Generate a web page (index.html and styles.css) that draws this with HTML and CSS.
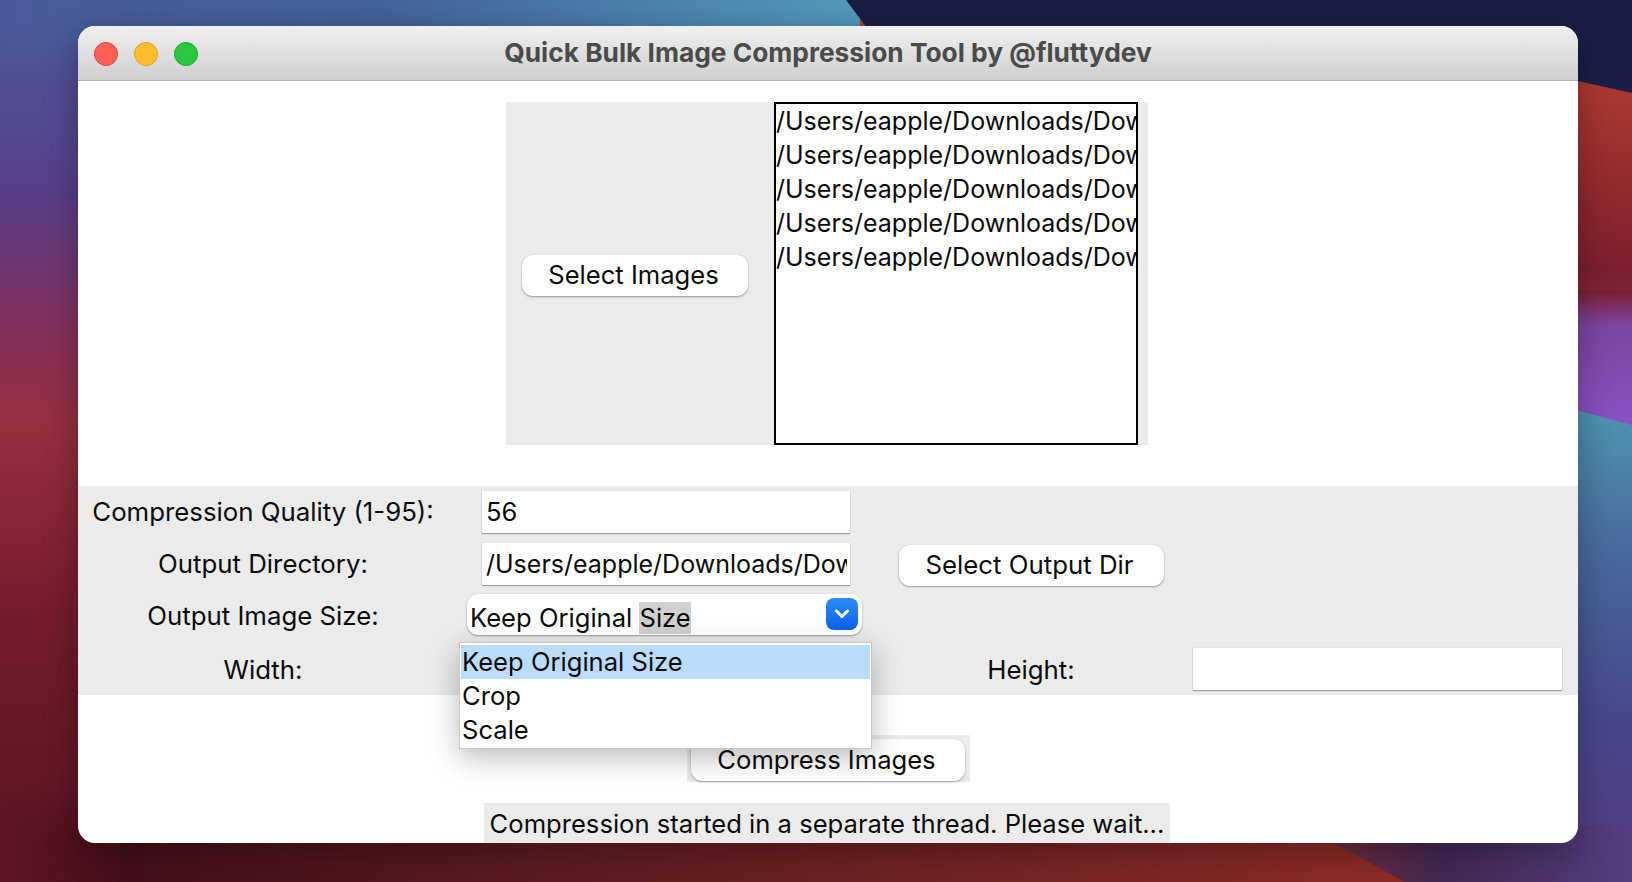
FILE: index.html
```html
<!DOCTYPE html>
<html lang="en">
<head>
<meta charset="utf-8">
<title>Quick Bulk Image Compression Tool</title>
<link rel="stylesheet" href="styles.css">
</head>
<body>
<svg class="wallpaper" viewBox="0 0 1632 882" preserveAspectRatio="none" aria-hidden="true">
  <defs>
    <linearGradient id="gLeft" x1="0" y1="0" x2="0" y2="1">
      <stop offset="0" stop-color="#4a5b9c"/>
      <stop offset=".22" stop-color="#583f88"/>
      <stop offset=".38" stop-color="#86305a"/>
      <stop offset=".48" stop-color="#96303f"/>
      <stop offset=".7" stop-color="#741b2b"/>
      <stop offset="1" stop-color="#5a1422"/>
    </linearGradient>
    <linearGradient id="gTop" x1="0" y1="0" x2="850" y2="0" gradientUnits="userSpaceOnUse">
      <stop offset="0" stop-color="#4b5a9c"/>
      <stop offset=".45" stop-color="#43649a"/>
      <stop offset="1" stop-color="#5299bb"/>
    </linearGradient>
    <linearGradient id="gBottom" x1="0" y1="0" x2="1400" y2="0" gradientUnits="userSpaceOnUse">
      <stop offset="0" stop-color="#5f1524"/>
      <stop offset=".09" stop-color="#440f1a"/>
      <stop offset=".4" stop-color="#5c1c20"/>
      <stop offset="1" stop-color="#8c2b28"/>
    </linearGradient>
    <linearGradient id="gRed" x1="0" y1="60" x2="0" y2="320" gradientUnits="userSpaceOnUse">
      <stop offset="0" stop-color="#b43c30"/>
      <stop offset=".8" stop-color="#7c1f2e"/>
      <stop offset="1" stop-color="#7c2a4c"/>
    </linearGradient>
    <linearGradient id="gPurple" x1="0" y1="290" x2="0" y2="430" gradientUnits="userSpaceOnUse">
      <stop offset="0" stop-color="#7c1f30"/>
      <stop offset=".25" stop-color="#7c44a0"/>
      <stop offset="1" stop-color="#8a52c4"/>
    </linearGradient>
    <linearGradient id="gTeal" x1="0" y1="410" x2="0" y2="882" gradientUnits="userSpaceOnUse">
      <stop offset="0" stop-color="#4f94b0"/>
      <stop offset=".3" stop-color="#48699c"/>
      <stop offset=".65" stop-color="#47488a"/>
      <stop offset="1" stop-color="#563a80"/>
    </linearGradient>
    <linearGradient id="gCorner" x1="1340" y1="0" x2="1632" y2="0" gradientUnits="userSpaceOnUse">
      <stop offset="0" stop-color="#6c2a3c"/>
      <stop offset=".35" stop-color="#412852"/>
      <stop offset="1" stop-color="#553e80"/>
    </linearGradient>
    <linearGradient id="fadeTop" x1="0" y1="0" x2="0" y2="70" gradientUnits="userSpaceOnUse">
      <stop offset=".3" stop-color="#fff"/>
      <stop offset="1" stop-color="#000"/>
    </linearGradient>
    <linearGradient id="fadeBottom" x1="0" y1="790" x2="0" y2="860" gradientUnits="userSpaceOnUse">
      <stop offset="0" stop-color="#000"/>
      <stop offset=".75" stop-color="#fff"/>
    </linearGradient>
    <mask id="maskTop" maskUnits="userSpaceOnUse" x="0" y="0" width="1632" height="882">
      <rect width="1632" height="882" fill="url(#fadeTop)"/>
    </mask>
    <mask id="maskBottom" maskUnits="userSpaceOnUse" x="0" y="0" width="1632" height="882">
      <rect width="1632" height="882" fill="url(#fadeBottom)"/>
    </mask>
  </defs>
  <rect width="1632" height="882" fill="url(#gLeft)"/>
  <rect width="860" height="70" fill="url(#gTop)" mask="url(#maskTop)"/>
  <rect y="790" width="1632" height="92" fill="url(#gBottom)" mask="url(#maskBottom)"/>
  <polygon points="860,20 1632,60 1632,320 1100,320 860,60" fill="url(#gRed)"/>
  <polygon points="1500,290 1632,290 1632,430 1500,430" fill="url(#gPurple)"/>
  <polygon points="1500,390 1632,425 1632,882 1500,882" fill="url(#gTeal)"/>
  <polygon points="1300,825 1405,882 1632,882 1632,825" fill="url(#gCorner)"/>
  <polygon points="846,0 1632,0 1632,93 1578,81 905,46 867,28" fill="#1a1e47"/>
</svg>

<main class="window">
  <header class="titlebar">
    <div class="lights">
      <span class="light light-red"></span>
      <span class="light light-yellow"></span>
      <span class="light light-green"></span>
    </div>
    <h1 class="title">Quick Bulk Image Compression Tool by @fluttydev</h1>
  </header>

  <section class="picker-wrap">
    <div class="picker">
      <button class="btn btn-images" type="button">Select Images</button>
      <ul class="listbox">
        <li>/Users/eapple/Downloads/Dow</li>
        <li>/Users/eapple/Downloads/Dow</li>
        <li>/Users/eapple/Downloads/Dow</li>
        <li>/Users/eapple/Downloads/Dow</li>
        <li>/Users/eapple/Downloads/Dow</li>
      </ul>
    </div>
  </section>

  <section class="form">
    <label class="label label-wide">Compression Quality (1-95):</label>
    <div class="entry entry-mid">56</div>
    <span></span>
    <span></span>

    <label class="label label-wide">Output Directory:</label>
    <div class="entry entry-mid"><span class="entry-clip">/Users/eapple/Downloads/Dow</span></div>
    <button class="btn btn-output" type="button">Select Output Dir</button>
    <span></span>

    <label class="label label-wide label-low">Output Image Size:</label>
    <div class="combo">
      <span class="combo-text">Keep Original <span class="combo-sel">Size</span></span>
      <span class="combo-arrow">
        <svg width="16" height="10" viewBox="0 0 16 10" aria-hidden="true"><path d="M2.5 2 L8 7.5 L13.5 2" fill="none" stroke="#fff" stroke-width="3" stroke-linecap="round" stroke-linejoin="round"/></svg>
      </span>
      <ul class="dropdown">
        <li class="dropdown-active">Keep Original Size</li>
        <li>Crop</li>
        <li>Scale</li>
      </ul>
    </div>
    <span></span>
    <span></span>

    <label class="label label-wide label-low">Width:</label>
    <div class="entry entry-mid"></div>
    <label class="label label-wide label-low">Height:</label>
    <div class="entry entry-wide"></div>
  </section>

  <section class="compress-wrap">
    <div class="compress-back">
      <button class="btn btn-compress" type="button">Compress Images</button>
    </div>
  </section>

  <section class="status-wrap">
    <div class="status">Compression started in a separate thread. Please wait...</div>
  </section>
</main>
</body>
</html>
```

FILE: styles.css
```css
* { box-sizing: border-box; }

html, body {
  margin: 0;
  width: 1632px;
  height: 882px;
  overflow: hidden;
}

body {
  position: relative;
  font-family: Inter, "Liberation Sans", sans-serif;
  font-size: 25.6px;
  color: #0b0b0b;
  background: #5a1422;
}

.wallpaper {
  position: absolute;
  inset: 0;
  width: 1632px;
  height: 882px;
  display: block;
}

.window {
  position: absolute;
  left: 78px;
  top: 26px;
  width: 1500px;
  height: 817px;
  border-radius: 17px;
  overflow: hidden;
  background: #fff;
  display: flex;
  flex-direction: column;
  box-shadow: 0 8px 34px rgba(0, 0, 0, .32);
}

.titlebar {
  flex: none;
  height: 55px;
  padding-bottom: 2px;
  display: flex;
  align-items: center;
  justify-content: center;
  position: relative;
  background: linear-gradient(#f0f0f0, #cfcfcf);
  border-bottom: 1px solid #b2b2b2;
}

.lights {
  position: absolute;
  left: 16px;
  top: 16px;
  display: flex;
  gap: 16px;
}

.light {
  width: 24px;
  height: 24px;
  border-radius: 50%;
  border: 1px solid rgba(0, 0, 0, .1);
}
.light-red { background: #ff5f57; border-color: #e0443e; }
.light-yellow { background: #ffbd2e; border-color: #dea123; }
.light-green { background: #28c940; border-color: #1aab29; }

.title {
  margin: 0;
  font-size: 26.3px;
  font-weight: 700;
  color: #4b4b4b;
  white-space: nowrap;
}

.picker-wrap {
  flex: none;
  height: 405px;
  padding-top: 21px;
  padding-left: 428px;
}

.picker {
  width: 642px;
  height: 343px;
  background: #ebebeb;
  display: flex;
  align-items: center;
  padding: 0 10px 0 16px;
}

.btn {
  display: block;
  margin: 0;
  padding: 0 3px 2px 0;
  height: 42px;
  font: inherit;
  color: inherit;
  background: #fff;
  border: none;
  border-radius: 11px;
  box-shadow: 0 1px 2px rgba(0, 0, 0, .35), 0 0 1px rgba(0, 0, 0, .15);
  white-space: nowrap;
}

.btn-images {
  width: 226px;
  height: 41px;
  margin: 4px 26px 0 0;
}

.listbox {
  width: 364px;
  height: 343px;
  margin: 0;
  padding: 0;
  list-style: none;
  background: #fff;
  border: 2px solid #000;
  overflow: hidden;
  font-size: 25px;
}

.listbox li {
  height: 34px;
  line-height: 34px;
  white-space: nowrap;
  overflow: hidden;
}

.form {
  flex: none;
  height: 209px;
  background: #ebebeb;
  padding-top: 5px;
  display: grid;
  grid-template-columns: 370px 436px 294px 400px;
  grid-template-rows: 52px 51px 54px 42px;
  align-items: start;
  justify-items: center;
}

.label {
  height: 42px;
  line-height: 42px;
  white-space: nowrap;
}

.label-wide { font-size: 25.8px; }
.label-low { padding-top: 1px; }

.entry {
  height: 42px;
  line-height: 42px;
  background: #fff;
  box-shadow: 0 1px 1px rgba(0, 0, 0, .3), 0 0 1px rgba(0, 0, 0, .18);
  padding: 0 3px;
  white-space: nowrap;
  overflow: hidden;
}

.entry-mid { width: 368px; padding-left: 4px; }
.entry-wide { width: 369px; margin-left: -1px; }

.entry-clip {
  display: block;
  overflow: hidden;
  font-size: 25px;
}

.btn-output {
  width: 265px;
  height: 41px;
  margin-top: 2px;
  font-size: 25.8px;
}

.combo {
  position: relative;
  width: 395px;
  height: 41px;
  margin-left: -3px;
  background: #fff;
  border-radius: 11px;
  box-shadow: 0 1px 2px rgba(0, 0, 0, .35), 0 0 1px rgba(0, 0, 0, .15);
  padding-left: 3px;
  line-height: 48px;
  white-space: nowrap;
}

.combo-sel {
  background: #d0d0d0;
  display: inline-block;
  line-height: 32px;
}

.combo-arrow {
  position: absolute;
  right: 4px;
  top: 4px;
  width: 32px;
  height: 32px;
  border-radius: 8px;
  background: linear-gradient(#2b8dfb, #0a62e6);
  display: flex;
  align-items: center;
  justify-content: center;
}

.dropdown {
  position: absolute;
  z-index: 5;
  left: -8px;
  top: 48px;
  width: 413px;
  height: 107px;
  margin: 0;
  padding: 2px 1px;
  list-style: none;
  background: #fff;
  border: 1px solid #c8c8c8;
  box-shadow: 0 8px 28px rgba(0, 0, 0, .28);
  line-height: 34px;
}

.dropdown li { height: 34px; padding-left: 1px; }
.dropdown-active { background: #bcdcfe; }

.compress-wrap {
  flex: none;
  height: 67px;
  padding-top: 40px;
  padding-left: 609px;
  overflow: visible;
}

.compress-back {
  width: 283px;
  height: 47px;
  background: #ebebeb;
  padding: 4px 5px 0 4px;
}

.btn-compress {
  width: 274px;
  height: 42px;
}

.status-wrap {
  flex: none;
  padding-top: 41px;
  display: flex;
  padding-left: 406px;
}

.status {
  width: 686px;
  height: 40px;
  line-height: 42px;
  background: #ebebeb;
  text-align: center;
  white-space: nowrap;
}
```
